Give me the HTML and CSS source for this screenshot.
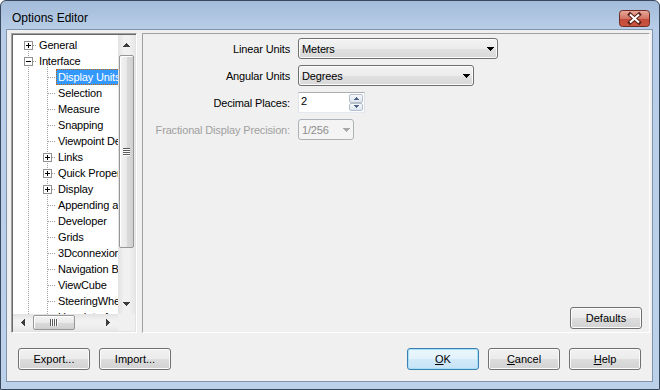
FILE: index.html
```html
<!DOCTYPE html>
<html lang="en">
<head>
    <meta charset="UTF-8">
    <title>Options Editor</title>
    <link rel="stylesheet" href="styles.css">
</head>
<body>
<div class="window">
    <div class="titlebar">
        <span class="title">Options Editor</span>
        <button class="close-btn" aria-label="Close">
            <svg width="31" height="17" viewBox="0 0 31 17">
                <defs>
                    <linearGradient id="red" x1="0" y1="0" x2="0" y2="1">
                        <stop offset="0" stop-color="#e9aa9c"/>
                        <stop offset="0.5" stop-color="#d27565"/>
                        <stop offset="0.51" stop-color="#c4493b"/>
                        <stop offset="1" stop-color="#c9563f"/>
                    </linearGradient>
                </defs>
                <rect x="0.5" y="0.5" width="30" height="16" rx="3" fill="url(#red)" stroke="#6e2c24"/>
                <path d="M11 4.5l9 8M20 4.5l-9 8" stroke="#5a2019" stroke-width="4" stroke-linecap="square"/>
                <path d="M11 4.5l9 8M20 4.5l-9 8" stroke="#fff" stroke-width="2"/>
            </svg>
        </button>
    </div>

    <div class="client">
        <div class="main">
            <div class="tree-panel">
                <div class="tree-top">
                    <ul class="tree">
                        <li class="root"><span class="twig"><svg width="9" height="9" viewBox="0 0 9 9"><rect x=".5" y=".5" width="8" height="8" fill="#fff" stroke="#919191"/><path d="M2 4.5h5M4.5 2v5" stroke="#000"/></svg></span><span class="label">General</span></li>
                        <li class="root"><span class="twig"><svg width="9" height="9" viewBox="0 0 9 9"><rect x=".5" y=".5" width="8" height="8" fill="#fff" stroke="#919191"/><path d="M2 4.5h5" stroke="#000"/></svg></span><span class="label">Interface</span></li>
                        <li class="child"><span class="twig"></span><span class="label sel">Display Units</span></li>
                        <li class="child"><span class="twig"></span><span class="label">Selection</span></li>
                        <li class="child"><span class="twig"></span><span class="label">Measure</span></li>
                        <li class="child"><span class="twig"></span><span class="label">Snapping</span></li>
                        <li class="child"><span class="twig"></span><span class="label">Viewpoint Defaults</span></li>
                        <li class="child"><span class="twig"><svg width="9" height="9" viewBox="0 0 9 9"><rect x=".5" y=".5" width="8" height="8" fill="#fff" stroke="#919191"/><path d="M2 4.5h5M4.5 2v5" stroke="#000"/></svg></span><span class="label">Links</span></li>
                        <li class="child"><span class="twig"><svg width="9" height="9" viewBox="0 0 9 9"><rect x=".5" y=".5" width="8" height="8" fill="#fff" stroke="#919191"/><path d="M2 4.5h5M4.5 2v5" stroke="#000"/></svg></span><span class="label">Quick Properties</span></li>
                        <li class="child"><span class="twig"><svg width="9" height="9" viewBox="0 0 9 9"><rect x=".5" y=".5" width="8" height="8" fill="#fff" stroke="#919191"/><path d="M2 4.5h5M4.5 2v5" stroke="#000"/></svg></span><span class="label">Display</span></li>
                        <li class="child"><span class="twig"></span><span class="label">Appending and Merging</span></li>
                        <li class="child"><span class="twig"></span><span class="label">Developer</span></li>
                        <li class="child"><span class="twig"></span><span class="label">Grids</span></li>
                        <li class="child"><span class="twig"></span><span class="label">3Dconnexion</span></li>
                        <li class="child"><span class="twig"></span><span class="label">Navigation Bar</span></li>
                        <li class="child"><span class="twig"></span><span class="label">ViewCube</span></li>
                        <li class="child"><span class="twig"></span><span class="label">SteeringWheels</span></li>
                        <li class="child"><span class="twig"></span><span class="label">User Interface</span></li>
                    </ul>
                    <div class="vscroll">
                        <div class="sb-btn">
                            <svg width="7" height="4" viewBox="0 0 7 4" shape-rendering="crispEdges"><path d="M3 0h1v1h1v1h1v1h1v1H0V3h1V2h1V1h1z" fill="#3c3c3c"/></svg>
                        </div>
                        <div class="vtrack">
                            <div class="vthumb">
                                <svg width="7" height="8" viewBox="0 0 7 8" shape-rendering="crispEdges"><path d="M0 0h7v1H0zM0 2h7v1H0zM0 4h7v1H0zM0 6h7v1H0z" fill="#5b5b5b"/><path d="M0 1h7v1H0zM0 3h7v1H0zM0 5h7v1H0zM0 7h7v1H0z" fill="#fff"/></svg>
                            </div>
                        </div>
                        <div class="sb-btn">
                            <svg width="7" height="4" viewBox="0 0 7 4" shape-rendering="crispEdges"><path d="M0 0h7v1H6v1H5v1H4v1H3V3H2V2H1V1H0z" fill="#3c3c3c"/></svg>
                        </div>
                    </div>
                </div>
                <div class="tree-bottom">
                    <div class="hscroll">
                        <div class="sb-btn h">
                            <svg width="4" height="7" viewBox="0 0 4 7" shape-rendering="crispEdges"><path d="M3 0h1v7H3V6H2V5H1V4H0V3h1V2h1V1h1z" fill="#3c3c3c"/></svg>
                        </div>
                        <div class="htrack">
                            <div class="hthumb">
                                <svg width="8" height="7" viewBox="0 0 8 7" shape-rendering="crispEdges"><path d="M0 0h1v7H0zM2 0h1v7H2zM4 0h1v7H4zM6 0h1v7H6z" fill="#5b5b5b"/><path d="M1 0h1v7H1zM3 0h1v7H3zM5 0h1v7H5zM7 0h1v7H7z" fill="#fff"/></svg>
                            </div>
                        </div>
                        <div class="sb-btn h">
                            <svg width="4" height="7" viewBox="0 0 4 7" shape-rendering="crispEdges"><path d="M0 0h1v1h1v1h1v1h1v1H3v1H2v1H1v1H0z" fill="#3c3c3c"/></svg>
                        </div>
                    </div>
                    <div class="corner"></div>
                </div>
            </div>

            <div class="options-panel">
                <div class="form">
                    <span class="field-label">Linear Units</span>
                    <div class="combo wide">
                        <span>Meters</span>
                        <svg width="7" height="4" viewBox="0 0 7 4" shape-rendering="crispEdges"><path d="M0 0h7v1H6v1H5v1H4v1H3V3H2V2H1V1H0z" fill="#000"/></svg>
                    </div>

                    <span class="field-label">Angular Units</span>
                    <div class="combo medium">
                        <span>Degrees</span>
                        <svg width="7" height="4" viewBox="0 0 7 4" shape-rendering="crispEdges"><path d="M0 0h7v1H6v1H5v1H4v1H3V3H2V2H1V1H0z" fill="#000"/></svg>
                    </div>

                    <span class="field-label">Decimal Places:</span>
                    <div class="spin">
                        <span class="spin-value">2</span>
                        <div class="spin-btns">
                            <span><svg width="5" height="3" viewBox="0 0 5 3" shape-rendering="crispEdges"><path d="M2 0h1v1h1v1h1v1H0V2h1V1h1z" fill="#4c6288"/></svg></span>
                            <span><svg width="5" height="3" viewBox="0 0 5 3" shape-rendering="crispEdges"><path d="M0 0h5v1H4v1H3v1H2V2H1V1H0z" fill="#4c6288"/></svg></span>
                        </div>
                    </div>

                    <span class="field-label disabled">Fractional Display Precision:</span>
                    <div class="combo small is-disabled">
                        <span>1/256</span>
                        <svg width="7" height="4" viewBox="0 0 7 4" shape-rendering="crispEdges"><path d="M0 0h7v1H6v1H5v1H4v1H3V3H2V2H1V1H0z" fill="#a8a8a8"/></svg>
                    </div>
                </div>
                <div class="panel-footer">
                    <button class="btn">Defaults</button>
                </div>
            </div>
        </div>

        <div class="footer">
            <div class="btn-group">
                <button class="btn">Export...</button>
                <button class="btn">Import...</button>
            </div>
            <div class="btn-group">
                <button class="btn default"><u>O</u>K</button>
                <button class="btn"><u>C</u>ancel</button>
                <button class="btn"><u>H</u>elp</button>
            </div>
        </div>
    </div>
</div>
</body>
</html>
```

FILE: styles.css
```css
* {
    box-sizing: border-box;
}

body {
    margin: 0;
    background: #fff;
    font-family: "Liberation Sans", Arial, sans-serif;
    font-size: 11px;
    letter-spacing: -0.15px;
    color: #000;
}

/* window frame */
.window {
    width: 660px; height: 390px;
    display: flex; flex-direction: column;
    padding: 0 6px 7px 5px;
    border: 1px solid #3a4a5e;
    border-radius: 6px 6px 0 0;
    background: linear-gradient(#a3bcda, #b8cde7 28px, #bcd1ea);
}

.titlebar {
    height: 28px; flex: none;
    display: flex; justify-content: space-between; align-items: flex-start;
    padding-left: 6px;
}

.title {
    padding-top: 10px;
    font-size: 12px; line-height: 15px;
    letter-spacing: 0;
}

.close-btn {
    margin: 9px 3px 0 0; padding: 0;
    width: 31px; height: 17px;
    border: none; background: none;
}

.close-btn svg {
    display: block;
}

.client {
    flex: 1;
    display: flex; flex-direction: column;
    border: 1px solid #8194ad;
    background: #f0f0f0;
}

.main {
    display: flex; gap: 5px;
    padding: 3px 2px 0 4px;
}

/* tree */
.tree-panel {
    width: 126px; height: 300px;
    display: flex; flex-direction: column;
    padding: 1px;
    border: 1px solid;
    border-color: #a0a0a0 #fff #fff #a0a0a0;
    box-shadow: inset 1px 1px 0 #696969, inset -1px -1px 0 #e3e3e3;
}

.tree-top {
    height: 279px;
    display: flex;
}

.tree {
    width: 105px;
    margin: 0; padding: 2px 0 0;
    list-style: none;
    overflow: hidden;
    background:
        repeating-linear-gradient(#a0a0a0 0 1px, transparent 1px 2px) 15px 10px / 1px 100% no-repeat,
        repeating-linear-gradient(#a0a0a0 0 1px, transparent 1px 2px) 34px 26px / 1px 100% no-repeat,
        #fff;
}

.tree li {
    display: flex;
    height: 16px;
    white-space: nowrap;
}

.tree .root { padding-left: 11px; }
.tree .child { padding-left: 30px; }

.twig {
    flex: none;
    width: 13px; height: 16px;
    padding-top: 4px;
    background: repeating-linear-gradient(to right, #a0a0a0 0 1px, transparent 1px 2px) right 8px / 8px 1px no-repeat;
}

.twig svg {
    display: block;
}

.label {
    flex: none;
    height: 16px;
    padding: 0 1px;
    border: 1px solid transparent;
    line-height: 14px;
}

.label.sel {
    background: #3399ff; color: #fff;
    border: 1px dotted #cc6600;
}

/* scrollbars */
.vscroll {
    width: 17px;
    display: flex; flex-direction: column;
    background: linear-gradient(to right, #e2e2e2, #f1f1f1 35%, #f1f1f1 65%, #e7e7e7);
}

.sb-btn {
    height: 20px; flex: none;
    display: flex; align-items: center; justify-content: center;
}

.sb-btn svg {
    display: block;
}

.vtrack {
    flex: 1;
    padding: 0 1px;
}

.vthumb {
    height: 193px;
    display: flex; align-items: center; justify-content: center;
    border: 1px solid #979797; border-radius: 2px;
    background: linear-gradient(to right, #f3f3f3, #e9e9e9 50%, #dadada 51%, #d0d0d0);
    box-shadow: inset 1px 1px 0 #fff;
}

.tree-bottom {
    height: 17px;
    display: flex;
}

.hscroll {
    width: 105px;
    display: flex;
    background: linear-gradient(#e2e2e2, #f1f1f1 35%, #f1f1f1 65%, #e7e7e7);
}

.sb-btn.h {
    width: 20px; height: 17px;
}

.htrack {
    flex: 1;
    padding: 1px 0;
}

.hthumb {
    width: 42px; height: 100%;
    display: flex; align-items: center; justify-content: center;
    border: 1px solid #979797; border-radius: 2px;
    background: linear-gradient(#f3f3f3, #e9e9e9 50%, #dadada 51%, #d0d0d0);
    box-shadow: inset 1px 1px 0 #fff;
}

.corner {
    flex: 1;
    background: #f0f0f0;
}

/* options */
.options-panel {
    flex: 1; height: 300px;
    display: flex; flex-direction: column;
    border: 1px solid;
    border-color: #a0a0a0 #fff #fff #a0a0a0;
}

.form {
    display: grid;
    grid-template-columns: 147px 1fr;
    grid-auto-rows: 21px;
    column-gap: 8px; row-gap: 6px;
    align-items: center;
    padding-top: 4px;
}

.field-label {
    justify-self: end;
}

.field-label.disabled {
    color: #a0a0a0;
}

.combo {
    height: 21px;
    display: flex; align-items: center; justify-content: space-between;
    padding: 0 3px;
    border: 1px solid #707070; border-radius: 3px;
    background: linear-gradient(#f3f3f3, #ececec 50%, #e1e1e1 51%, #d8d8d8);
    box-shadow: inset 0 0 0 1px #fbfbfb;
}

.combo svg {
    display: block;
}

.combo.wide { width: 200px; }
.combo.medium { width: 176px; }
.combo.small { width: 56px; }

.combo.is-disabled {
    border-color: #adb2b5;
    background: #f4f4f4;
    box-shadow: none;
    color: #8d8d8d;
}

.spin {
    width: 67px; height: 21px;
    display: flex;
    border: 1px solid;
    border-color: #abadb3 #dbdfe6 #e3e9ef #e2e3ea;
    background: #fff;
}

.spin-value {
    flex: 1;
    padding-left: 2px;
    line-height: 17px;
}

.spin-btns {
    width: 15px;
    display: flex; flex-direction: column;
    padding: 1px 1px 1px 0;
}

.spin-btns span {
    flex: 1;
    display: flex; align-items: center; justify-content: center;
    border: 1px solid #b6c0cc; border-radius: 2px;
    background: linear-gradient(#f6f9fc, #dde5ef);
}

.spin-btns svg {
    display: block;
}

.panel-footer {
    margin-top: auto;
    display: flex; justify-content: flex-end;
    padding: 0 7px 3px 0;
}

/* buttons */
.btn {
    width: 72px; height: 22px;
    padding: 0;
    border: 1px solid #707070; border-radius: 3px;
    background: linear-gradient(#f2f2f2, #ebebeb 50%, #dddddd 51%, #d2d2d2);
    box-shadow: inset 0 0 0 1px #fbfbfb;
    font: inherit; color: #000;
}

.btn.default {
    border-color: #3c7fb1;
    box-shadow: inset 0 0 0 1px #a6e0f7;
    background: linear-gradient(#eaf6fd, #e2f1fb 50%, #d1eaf9 51%, #c6e3f7);
}

.footer {
    display: flex; justify-content: space-between;
    padding: 15px 11px 11px;
}

.btn-group {
    display: flex; gap: 9px;
}
```
